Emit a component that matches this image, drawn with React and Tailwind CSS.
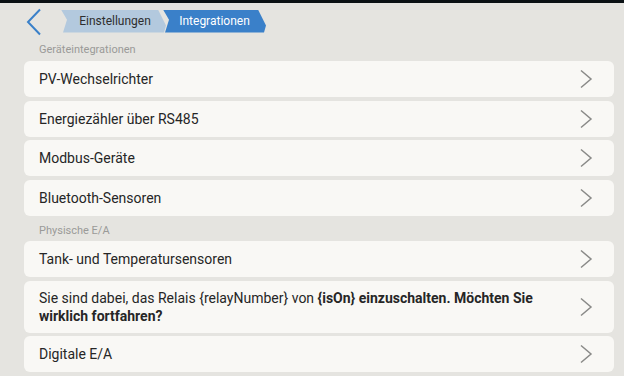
import React from 'react'

const Chevron = () => (
  <svg width="13" height="20" viewBox="0 0 13 20" className="shrink-0">
    <path d="M1 1.5 L11 10 L1 18.5" fill="none" stroke="#8a8a88" strokeWidth="1.5" />
  </svg>
)

function Row({ children, tall }) {
  return (
    <div
      className={`flex items-center justify-between rounded-md bg-[#f9f8f5] pl-[15px] pr-[21px] ${
        tall ? 'py-[8px]' : 'h-[36px]'
      }`}
    >
      <div className="flex-1 pr-[20px] text-[14px] leading-[18px] text-[#262626]">{children}</div>
      <Chevron />
    </div>
  )
}

export default function App() {
  return (
    <div
      className="w-[624px] h-[376px] overflow-hidden bg-[#e5e4e0] flex flex-col"
      style={{ fontFamily: 'Roboto, "Liberation Sans", sans-serif' }}
    >
      {/* top bar */}
      <div className="h-[3px] bg-[#0b1114]" />

      {/* Header */}
      <div className="h-[38px] flex items-center pl-[26px]">
        <svg width="16" height="28" viewBox="0 0 16 28">
          <path d="M14 1.5 L2 14 L14 26.5" fill="none" stroke="#3a80c9" strokeWidth="2" />
        </svg>
        <div className="flex items-center ml-[19px] mt-[-2px]">
          <div
            className="h-[23px] w-[105px] bg-[#b3c9de] flex items-center justify-center pl-[3px] text-[12px] text-[#2e2e2e]"
            style={{ clipPath: 'polygon(0 0, calc(100% - 8px) 0, 100% 70%, calc(100% - 2px) 100%, 2px 100%, 6px 45%)' }}
          >
            Einstellungen
          </div>
          <div
            className="h-[23px] w-[103px] ml-[-3px] bg-[#3a80c9] flex items-center justify-center text-[12px] text-white"
            style={{ clipPath: 'polygon(0 0, calc(100% - 8px) 0, 100% 70%, calc(100% - 2px) 100%, 2px 100%, 6px 45%)' }}
          >
            Integrationen
          </div>
        </div>
      </div>

      <div className="flex flex-col pl-6 pr-[10px]">
        <div className="h-[20px] pt-[2px] pl-[15px] text-[11px] leading-[14px] text-[#9a9a98]">
          Geräteintegrationen
        </div>
        <div className="flex flex-col gap-[3.5px]">
          <Row>PV-Wechselrichter</Row>
          <Row>Energiezähler über RS485</Row>
          <Row>Modbus-Geräte</Row>
          <Row>Bluetooth-Sensoren</Row>
        </div>

        <div className="h-[25.5px] pt-[8px] pl-[15px] text-[11px] leading-[14px] text-[#9a9a98]">
          Physische E/A
        </div>
        <div className="flex flex-col gap-[3.5px]">
          <Row>Tank- und Temperatursensoren</Row>
          <Row tall>
            Sie sind dabei, das Relais {'{relayNumber}'} von{' '}
            <b className="font-bold">{'{isOn}'} einzuschalten. Möchten Sie wirklich fortfahren?</b>
          </Row>
          <Row>Digitale E/A</Row>
        </div>
      </div>
    </div>
  )
}
